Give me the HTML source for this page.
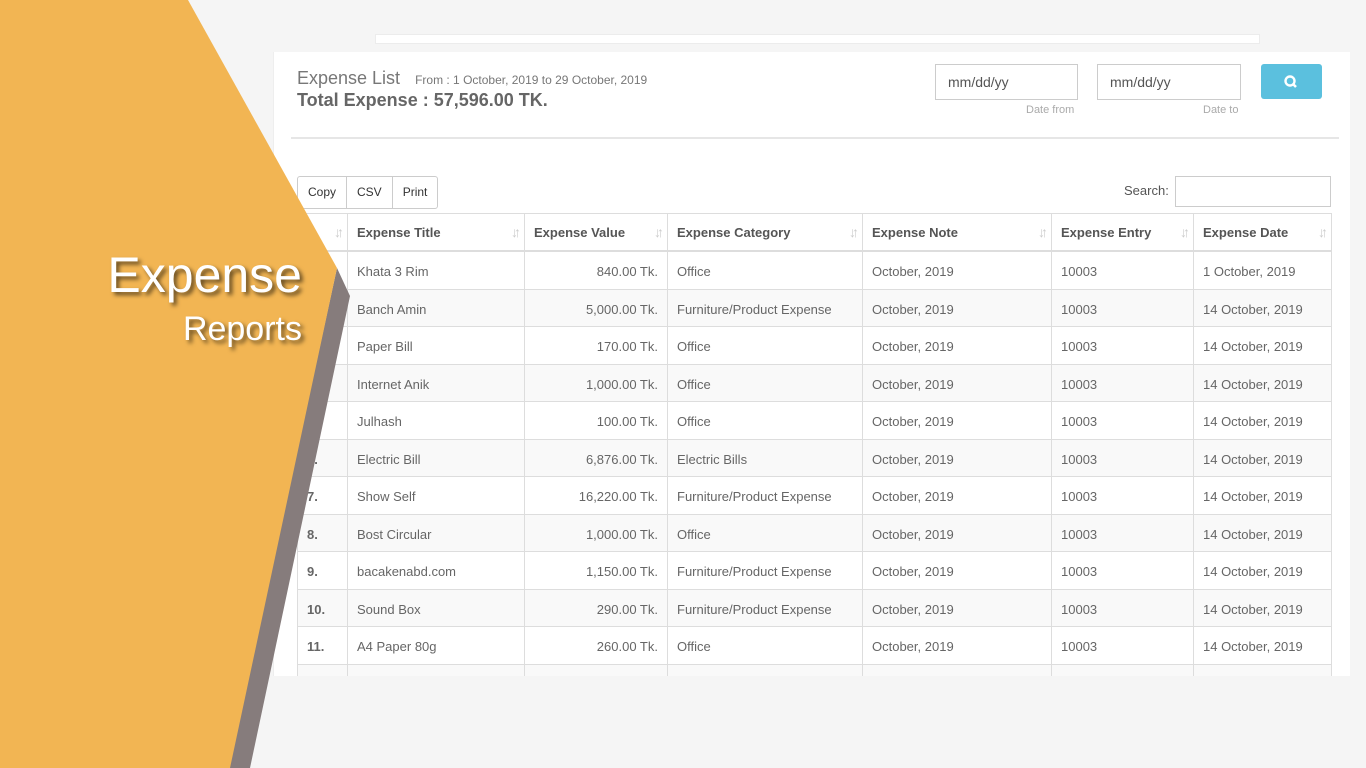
<!DOCTYPE html>
<html><head><style>
body{margin:0;width:1366px;height:768px;background:#f5f5f5;position:relative;overflow:hidden;font-family:"Liberation Sans",sans-serif;color:#666}
.topbar{position:absolute;left:375px;top:34px;width:883px;height:8px;background:#fff;border:1px solid #ececec}
.card{position:absolute;left:273px;top:52px;width:1076px;height:624px;background:#fff;border-left:1px solid #eee;overflow:hidden}
.t1{position:absolute;left:23px;top:16px;font-size:18px;color:#777}
.t1 small{font-size:12px;margin-left:10px;color:#777}
.t2{position:absolute;left:23px;top:38px;font-size:18px;font-weight:bold;color:#666}
.hr{position:absolute;left:17px;top:85px;width:1048px;height:2px;background:#e6e6e6}
.inp{position:absolute;top:12px;height:36px;border:1px solid #ccc;box-sizing:border-box;font-size:14px;color:#555;padding:9px 12px}
.lbl{position:absolute;top:52px;font-size:11px;color:#aaa}
.btn{position:absolute;left:987px;top:12px;width:61px;height:35px;background:#5bc0de;border-radius:3px}
.btns{position:absolute;left:23px;top:124px;height:31px;border:1px solid #ccc;border-radius:3px;display:flex;font-size:12px;color:#333}
.btns div{padding:8px 10px;border-right:1px solid #ccc}
.btns div:last-child{border-right:0}
.search{position:absolute;left:850px;top:131px;font-size:13px;color:#555}
.sbox{position:absolute;left:901px;top:124px;width:156px;height:31px;border:1px solid #ccc;box-sizing:border-box}
table{position:absolute;left:23px;top:161px;border-collapse:collapse;font-size:13px;table-layout:fixed}
td,th{border:1px solid #ddd;padding:0 9px;white-space:nowrap;overflow:hidden}
td{height:33.5px;padding-top:3px}
th{text-align:left;font-weight:bold;color:#555;border-bottom:2px solid #ddd;position:relative;height:35px;padding-top:1px}
th:after{content:"↓↑";position:absolute;right:7px;top:10px;font-size:14px;color:#ccc;letter-spacing:-4px;font-weight:bold}
tr:nth-child(odd) td{background:#f9f9f9}
td.r{text-align:right}
td.b{font-weight:bold}
.ov{position:absolute;left:0;top:0}
.h1{position:absolute;right:1064px;top:250px;font-size:50px;color:#fff;text-shadow:3px 3px 4px rgba(0,0,0,.6);line-height:1}
.h2{position:absolute;right:1064px;top:312px;font-size:34px;color:#fff;text-shadow:3px 3px 4px rgba(0,0,0,.6);line-height:1}
</style></head><body>
<div class="topbar"></div>
<div class="card">
<div class="t1">Expense List <small>From : 1 October, 2019 to 29 October, 2019</small></div>
<div class="t2">Total Expense : 57,596.00 TK.</div>
<div class="inp" style="left:661px;width:143px">mm/dd/yy</div>
<div class="inp" style="left:823px;width:144px">mm/dd/yy</div>
<div class="lbl" style="left:752px">Date from</div>
<div class="lbl" style="left:929px">Date to</div>
<div class="btn"><svg width="61" height="35"><circle cx="29" cy="17" r="4.5" stroke="#fff" stroke-width="2.4" fill="none"/><line x1="32" y1="20" x2="35" y2="23" stroke="#fff" stroke-width="2.6"/></svg></div>
<div class="hr"></div>
<div class="btns"><div>Copy</div><div>CSV</div><div>Print</div></div>
<div class="search">Search:</div><div class="sbox"></div>
<table>
<colgroup><col style="width:50px"><col style="width:177px"><col style="width:143px"><col style="width:195px"><col style="width:189px"><col style="width:142px"><col style="width:138px"></colgroup>
<tr><th></th><th>Expense Title</th><th>Expense Value</th><th>Expense Category</th><th>Expense Note</th><th>Expense Entry</th><th>Expense Date</th></tr>
<tr><td class="b">1.</td><td>Khata 3 Rim</td><td class="r">840.00 Tk.</td><td>Office</td><td>October, 2019</td><td>10003</td><td>1 October, 2019</td></tr>
<tr><td class="b">2.</td><td>Banch Amin</td><td class="r">5,000.00 Tk.</td><td>Furniture/Product Expense</td><td>October, 2019</td><td>10003</td><td>14 October, 2019</td></tr>
<tr><td class="b">3.</td><td>Paper Bill</td><td class="r">170.00 Tk.</td><td>Office</td><td>October, 2019</td><td>10003</td><td>14 October, 2019</td></tr>
<tr><td class="b">4.</td><td>Internet Anik</td><td class="r">1,000.00 Tk.</td><td>Office</td><td>October, 2019</td><td>10003</td><td>14 October, 2019</td></tr>
<tr><td class="b">5.</td><td>Julhash</td><td class="r">100.00 Tk.</td><td>Office</td><td>October, 2019</td><td>10003</td><td>14 October, 2019</td></tr>
<tr><td class="b">6.</td><td>Electric Bill</td><td class="r">6,876.00 Tk.</td><td>Electric Bills</td><td>October, 2019</td><td>10003</td><td>14 October, 2019</td></tr>
<tr><td class="b">7.</td><td>Show Self</td><td class="r">16,220.00 Tk.</td><td>Furniture/Product Expense</td><td>October, 2019</td><td>10003</td><td>14 October, 2019</td></tr>
<tr><td class="b">8.</td><td>Bost Circular</td><td class="r">1,000.00 Tk.</td><td>Office</td><td>October, 2019</td><td>10003</td><td>14 October, 2019</td></tr>
<tr><td class="b">9.</td><td>bacakenabd.com</td><td class="r">1,150.00 Tk.</td><td>Furniture/Product Expense</td><td>October, 2019</td><td>10003</td><td>14 October, 2019</td></tr>
<tr><td class="b">10.</td><td>Sound Box</td><td class="r">290.00 Tk.</td><td>Furniture/Product Expense</td><td>October, 2019</td><td>10003</td><td>14 October, 2019</td></tr>
<tr><td class="b">11.</td><td>A4 Paper 80g</td><td class="r">260.00 Tk.</td><td>Office</td><td>October, 2019</td><td>10003</td><td>14 October, 2019</td></tr>
<tr><td class="b">12.</td><td></td><td></td><td></td><td></td><td></td><td></td></tr>
</table>
</div>
<svg class="ov" width="1366" height="768"><polygon points="337,268 350,296 250,768 228,768" fill="#867c7c"/><polygon points="0,0 188,0 337,268 230,768 0,768" fill="#f2b553"/></svg>
<div class="h1">Expense</div>
<div class="h2">Reports</div>
</body></html>
